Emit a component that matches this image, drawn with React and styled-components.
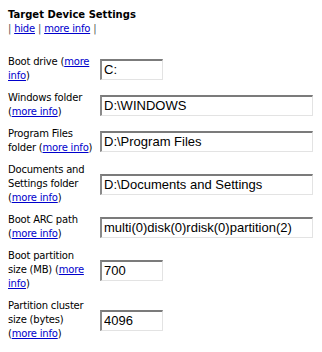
import React from "react";
import styled, { createGlobalStyle } from "styled-components";

const GlobalStyle = createGlobalStyle`
  html, body {
    margin: 0;
    padding: 0;
    background: #fff;
  }
  body {
    padding: 8px;
    font-family: Tahoma, "DejaVu Sans", sans-serif;
    font-size: 10px;
    color: #000;
  }
`;

const fields = [
  { label: ["Boot drive (", { link: ["more", "info"] }, ")"], value: "C:", short: true },
  { label: ["Windows folder", "\n", "(", { link: ["more info"] }, ")"], value: "D:\\WINDOWS" },
  { label: ["Program Files", "\n", "folder (", { link: ["more info"] }, ")"], value: "D:\\Program Files" },
  {
    label: ["Documents and", "\n", "Settings folder", "\n", "(", { link: ["more info"] }, ")"],
    value: "D:\\Documents and Settings",
  },
  { label: ["Boot ARC path", "\n", "(", { link: ["more info"] }, ")"], value: "multi(0)disk(0)rdisk(0)partition(2)" },
  {
    label: ["Boot partition", "\n", "size (MB) (", { link: ["more", "info"] }, ")"],
    value: "700",
    short: true,
  },
  {
    label: ["Partition cluster", "\n", "size (bytes)", "\n", "(", { link: ["more info"] }, ")"],
    value: "4096",
    short: true,
  },
];

const renderLabel = (parts) =>
  parts.map((p, i) => {
    if (p === "\n") return <br key={i} />;
    if (typeof p === "string") return <React.Fragment key={i}>{p}</React.Fragment>;
    return (
      <Link key={i} href="#">
        {p.link.map((t, j) => (
          <React.Fragment key={j}>
            {j > 0 && <br />}
            {t}
          </React.Fragment>
        ))}
      </Link>
    );
  });

export default function App() {
  return (
    <Panel>
      <GlobalStyle />
      <Title>Target Device Settings</Title>
      <Actions>
        <Sep>|</Sep> <Link href="#">hide</Link> <Sep>|</Sep> <Link href="#">more info</Link> <Sep>|</Sep>
      </Actions>
      <FieldList>
        {fields.map((f, i) => (
          <Row key={i}>
            <Label>{renderLabel(f.label)}</Label>
            <TextBox short={f.short ? 1 : 0} defaultValue={f.value} readOnly />
          </Row>
        ))}
      </FieldList>
    </Panel>
  );
}

const Panel = styled.div`
  width: 306px;
  line-height: 14px;
  letter-spacing: -0.2px;
`;

const Title = styled.div`
  font-weight: bold;
  font-size: 10px;
  letter-spacing: 0;
`;

const Actions = styled.div`
  margin-top: 0;
`;

const Sep = styled.span`
  color: #555;
`;

const Link = styled.a`
  color: #0000cc;
  text-decoration: underline;
`;

const FieldList = styled.div`
  display: flex;
  flex-direction: column;
  gap: 8px;
  margin-top: 19px;
`;

const Row = styled.div`
  display: flex;
  align-items: center;
`;

const Label = styled.div`
  width: 92px;
  white-space: nowrap;
`;

const TextBox = styled.input`
  box-sizing: border-box;
  width: ${({ short }) => (short ? "63px" : "213px")};
  height: 21px;
  padding: 0 2px;
  margin: 0;
  font-family: "Liberation Sans", Arial, sans-serif;
  font-size: 13px;
  color: #000;
  background: #fff;
  border-style: solid;
  border-width: 2px 1px 1px 2px;
  border-color: #7b7b7b #e3e3e3 #e3e3e3 #8a8a8a;
  outline: none;
`;
